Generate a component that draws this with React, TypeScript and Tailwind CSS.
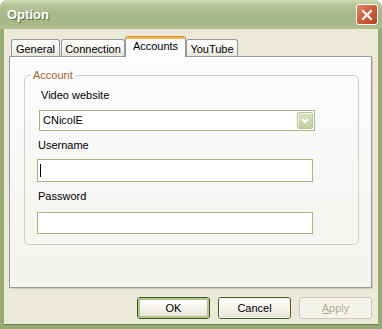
import React from "react";

const font = { fontFamily: '"Liberation Sans", Arial, sans-serif' };

function Tab({ label, active }: { label: string; active?: boolean }) {
  if (active) {
    return (
      <div className="relative z-10 flex h-[21px] w-[61px] flex-col overflow-hidden rounded-t-[3px] border-x border-[#919b9c] bg-[#fcfcfe]">
        <div className="h-[1px] bg-[#e0862b]" />
        <div className="h-[2px] bg-[#f3b64f]" />
        <div className="flex flex-1 items-start justify-center pt-[1px] text-[11px] leading-[13px] text-black">
          {label}
        </div>
      </div>
    );
  }
  return (
    <div className="flex h-[18px] items-start justify-center rounded-t-[3px] border-x border-t border-[#919b9c] bg-[linear-gradient(#ffffff,#f3f2ec_60%,#e6e4d8)] pt-[3px] text-[11px] leading-[13px] text-black">
      {label}
    </div>
  );
}

function Button({ label, kind }: { label: React.ReactNode; kind: "default" | "normal" | "disabled" }) {
  if (kind === "disabled") {
    return (
      <div className="flex h-[22px] w-[73px] items-center justify-center rounded-[3px] border border-[#cbc8b9] bg-[#f5f4ea] text-[11px] text-[#aca899]">
        {label}
      </div>
    );
  }
  return (
    <div className="h-[22px] w-[73px] rounded-[3px] border border-[#3f5d22] bg-[#f3f1e7]">
      <div
        className={
          "flex h-full w-full items-center justify-center rounded-[2px] bg-[linear-gradient(#ffffff,#f6f4ec_50%,#e7e4d6)] text-[11px] text-black " +
          (kind === "default" ? "border-2 border-[#b2c58f]" : "border border-[#faf9f2]")
        }
      >
        {label}
      </div>
    </div>
  );
}

function TextBox({ children, className }: { children?: React.ReactNode; className?: string }) {
  return (
    <div className={"flex items-center border border-[#a4b97f] bg-white " + (className ?? "")}>{children}</div>
  );
}

export default function App() {
  return (
    <div style={font} className="flex h-[329px] w-[382px] flex-col overflow-hidden rounded-t-[8px] bg-[#97aa74]">
      {/* title bar */}
      <div className="flex h-[29px] shrink-0 items-center justify-between bg-[linear-gradient(#d3ddb5,#b9c79a_15%,#a9b98a_45%,#a6b685_75%,#b2c091)] pl-[7px] pr-[4px]">
        <span className="pt-[1px] text-[13px] font-bold text-white [text-shadow:1px_1px_0_#5e6f40]">Option</span>
        <div className="flex h-[21px] w-[22px] items-center justify-center rounded-[3px] border border-white bg-[linear-gradient(135deg,#e2866b,#cd5b3b_50%,#b84525)]">
          <svg width="12" height="12" viewBox="0 0 12 12">
            <path d="M2 2 L10 10 M10 2 L2 10" stroke="white" strokeWidth="2.2" strokeLinecap="square" />
          </svg>
        </div>
      </div>

      {/* body */}
      <div className="mx-[4px] mb-[4px] flex flex-1 flex-col border-b border-[#6a8346] bg-[#ece9d8] pl-[5px] pt-[7px]">
        {/* tabs */}
        <div className="-mb-[1px] ml-[2px] flex h-[21px] items-end">
          <div className="mr-[1px] w-[49px]"><Tab label="General" /></div>
          <div className="w-[64px]"><Tab label="Connection" /></div>
          <Tab label="Accounts" active />
          <div className="w-[52px]"><Tab label="YouTube" /></div>
        </div>

        {/* panel */}
        <div className="h-[232px] w-[363px] border border-[#919b9c] bg-[linear-gradient(#fcfcfe,#f4f3ee)] [box-shadow:1px_1px_0_#d0cebf]">
          <fieldset className="ml-[14px] mt-[12px] w-[335px] rounded-[5px] border border-[#d0d0bf] pb-[10px]">
            <legend className="ml-[6px] px-[2px] text-[11px] leading-[13px] text-[#a5651f]">Account</legend>
            <div className="ml-[16px] mt-[7px] text-[11px] leading-[13px] text-black">Video website</div>
            <TextBox className="ml-[14px] mt-[8px] h-[21px] w-[276px] justify-between pl-[3px] pr-[1px]">
              <span className="text-[11px] text-black">CNicolE</span>
              <div className="flex h-[17px] w-[16px] items-center justify-center rounded-[2px] border border-[#b4c394] bg-[linear-gradient(#d8e1c0,#c2cea0)] [box-shadow:inset_1px_1px_0_#eef2e2]">
                <svg width="8" height="6" viewBox="0 0 8 6">
                  <path d="M1 1 L4 4 L7 1" stroke="white" strokeWidth="2" fill="none" />
                </svg>
              </div>
            </TextBox>
            <div className="ml-[13px] mt-[8px] text-[11px] leading-[13px] text-black">Username</div>
            <TextBox className="ml-[12px] mt-[7px] h-[23px] w-[276px] pl-[2px]">
              <div className="h-[13px] w-[1px] bg-black" />
            </TextBox>
            <div className="ml-[13px] mt-[8px] text-[11px] leading-[13px] text-black">Password</div>
            <TextBox className="ml-[12px] mt-[9px] h-[22px] w-[276px]" />
          </fieldset>
        </div>

        {/* buttons */}
        <div className="mt-[9px] flex w-[363px] justify-end gap-[8px]">
          <Button label="OK" kind="default" />
          <Button label="Cancel" kind="normal" />
          <Button
            label={
              <span>
                <span className="underline">A</span>pply
              </span>
            }
            kind="disabled"
          />
        </div>
      </div>
    </div>
  );
}
